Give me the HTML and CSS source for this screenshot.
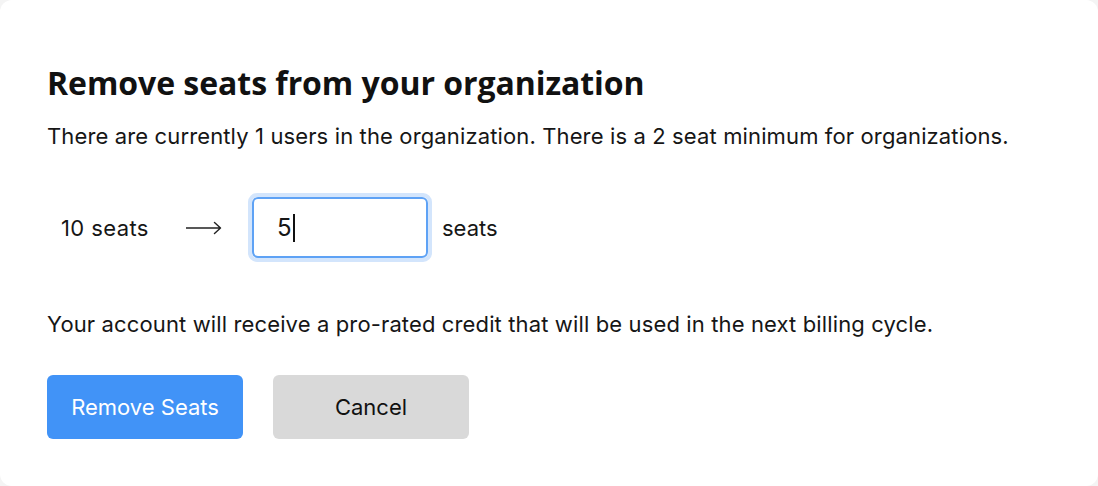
FILE: index.html
```html
<!DOCTYPE html>
<html lang="en">
<head>
<meta charset="utf-8">
<title>Remove seats</title>
<link rel="stylesheet" href="styles.css">
</head>
<body>
<div class="card">
  <h1 class="title">Remove seats from your organization</h1>
  <p class="text">There are currently 1 users in the organization. There is a 2 seat minimum for organizations.</p>
  <div class="seat-row">
    <span class="current">10 seats</span>
    <span class="arrow"><svg width="36" height="14" viewBox="0 0 36 14" aria-hidden="true"><path d="M0 7H34.5M28.5 1.5L34.5 7L28.5 12.5" fill="none" stroke="#222" stroke-width="1.4" stroke-linecap="round" stroke-linejoin="round"/></svg></span>
    <div class="input-wrap"><div class="input"><span class="value">5</span><span class="caret"></span></div></div>
    <span class="unit">seats</span>
  </div>
  <p class="text note">Your account will receive a pro-rated credit that will be used in the next billing cycle.</p>
  <div class="actions">
    <button class="btn btn-primary">Remove Seats</button>
    <button class="btn btn-secondary">Cancel</button>
  </div>
</div>
</body>
</html>
```
FILE: styles.css
```css
html, body {
  margin: 0;
  padding: 0;
  background: #f4f4f4;
}
body {
  width: 1098px;
  height: 486px;
  font-family: "Inter", "Noto Sans", sans-serif;
  color: #161616;
}
.card {
  box-sizing: border-box;
  width: 1098px;
  height: 486px;
  background: #ffffff;
  border-radius: 12px;
  padding: 63px 47px 0 47px;
}
.title {
  margin: 0;
  font-family: "Open Sans", sans-serif;
  font-weight: 700;
  font-size: 32px;
  line-height: 40px;
  color: #111;
  letter-spacing: -0.05px;
}
.text {
  margin: 18px 0 0 0;
  font-size: 22px;
  line-height: 30px;
  letter-spacing: 0.13px;
}
.seat-row {
  display: flex;
  align-items: center;
  margin-top: 42px;
  padding-left: 14px;
  height: 69px;
  font-size: 22px;
}
.current {
  width: 125px;
  letter-spacing: 0.4px;
}
.arrow {
  width: 62px;
  display: flex;
  align-items: center;
}
.arrow svg {
  display: block;
}
.input-wrap {
  border: 4px solid #d3e5fc;
  border-radius: 9px;
}
.input {
  box-sizing: border-box;
  width: 176px;
  height: 61px;
  border: 2px solid #5ea2f5;
  border-radius: 6px;
  background: #fff;
  display: flex;
  align-items: center;
  padding-left: 23px;
  font-size: 24px;
}
.caret {
  display: inline-block;
  width: 2px;
  height: 28px;
  background: #111;
  margin-left: 1px;
}
.unit {
  margin-left: 10px;
}
.note {
  margin-top: 47px;
}
.actions {
  display: flex;
  gap: 30px;
  margin-top: 36px;
}
.btn {
  width: 196px;
  height: 64px;
  border: none;
  border-radius: 6px;
  font-family: "Inter", "Noto Sans", sans-serif;
  font-size: 22px;
  cursor: pointer;
}
.btn-primary {
  background: #4193f7;
  color: #fff;
}
.btn-secondary {
  background: #d9d9d9;
  color: #111;
}
```
